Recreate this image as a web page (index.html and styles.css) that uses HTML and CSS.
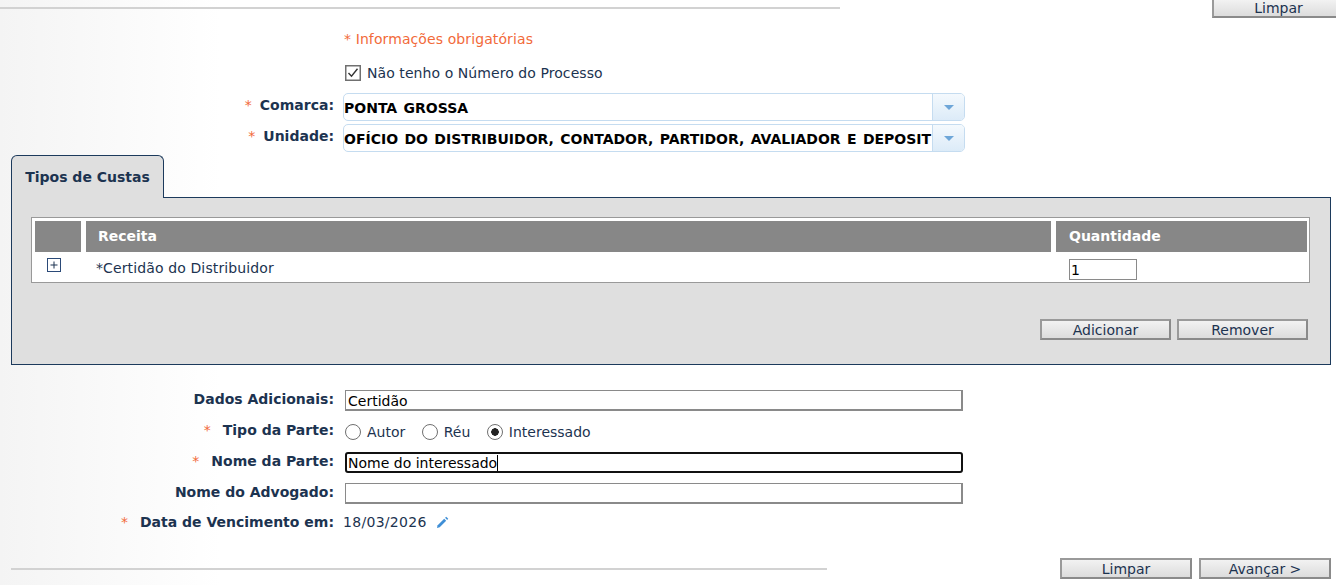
FILE: index.html
```html
<!DOCTYPE html>
<html lang="pt-BR">
<head>
    <meta charset="UTF-8">
    <title>Custas</title>
    <link rel="stylesheet" href="styles.css">
</head>
<body>
    <div class="top-bar">
        <div class="rule rule-top"></div>
        <button class="btn btn-top">Limpar</button>
    </div>

    <div class="form-head">
        <div class="row row-note"><span class="note">* Informações obrigatórias</span></div>
        <div class="row row-check">
            <label class="check-label">
                <svg class="check-icon" width="16" height="16" viewBox="0 0 16 16"><rect x="0.75" y="0.75" width="14.5" height="14.5" fill="#fff" stroke="#707070" stroke-width="1.5"/><path d="M3.5 8l3 3.2L12.5 3.8" fill="none" stroke="#333" stroke-width="1.4"/></svg>
                Não tenho o Número do Processo
            </label>
        </div>
        <div class="row row-combo">
            <span class="field-label"><span class="req">*</span>Comarca:</span>
            <div class="combo">
                <span class="combo-text">PONTA GROSSA</span>
                <span class="combo-arrow"></span>
            </div>
        </div>
        <div class="row row-combo">
            <span class="field-label"><span class="req">*</span>Unidade:</span>
            <div class="combo">
                <span class="combo-text">OFÍCIO DO DISTRIBUIDOR, CONTADOR, PARTIDOR, AVALIADOR E DEPOSIT</span>
                <span class="combo-arrow"></span>
            </div>
        </div>
    </div>

    <div class="tabs">
        <div class="tab">Tipos de Custas</div>
        <div class="panel">
            <div class="grid-box">
                <div class="grid-head">
                    <div class="cell-head cell-toggle"></div>
                    <div class="cell-head cell-name">Receita</div>
                    <div class="cell-head cell-qty">Quantidade</div>
                </div>
                <div class="grid-row">
                    <div class="cell-toggle">
                        <svg class="plus" width="14" height="14" viewBox="0 0 14 14"><rect x="0.5" y="0.5" width="13" height="13" fill="#fff" stroke="#2b4a78"/><path d="M3.5 7h7M7 3.5v7" stroke="#1c3350" stroke-width="1"/></svg>
                    </div>
                    <div class="cell-name">*Certidão do Distribuidor</div>
                    <div class="cell-qty"><div class="text-input qty-input">1</div></div>
                </div>
            </div>
            <div class="panel-actions">
                <button class="btn">Adicionar</button>
                <button class="btn">Remover</button>
            </div>
        </div>
    </div>

    <div class="form-foot">
        <div class="row row-input">
            <span class="field-label">Dados Adicionais:</span>
            <div class="text-input wide-input">Certidão</div>
        </div>
        <div class="row row-radio">
            <span class="field-label"><span class="req">*</span>Tipo da Parte:</span>
            <div class="radios">
                <span class="radio-item"><span class="radio"></span>Autor</span>
                <span class="radio-item"><span class="radio"></span>Réu</span>
                <span class="radio-item"><span class="radio radio-on"></span>Interessado</span>
            </div>
        </div>
        <div class="row row-input">
            <span class="field-label"><span class="req">*</span>Nome da Parte:</span>
            <div class="text-input wide-input input-focus">Nome do interessado<span class="caret"></span></div>
        </div>
        <div class="row row-input">
            <span class="field-label">Nome do Advogado:</span>
            <div class="text-input wide-input"></div>
        </div>
        <div class="row row-date">
            <span class="field-label"><span class="req">*</span>Data de Vencimento em:</span>
            <span class="date-value">18/03/2026</span>
            <svg class="pencil" width="13" height="13" viewBox="0 0 14 14"><path d="M1 13l.8-3 7-7 2.2 2.2-7 7z" fill="#3f8fd6"/><path d="M9.8 2l1.2-1.2 2.2 2.2-1.2 1.2z" fill="#3f8fd6"/></svg>
        </div>
    </div>

    <div class="bottom-bar">
        <div class="rule rule-bottom"></div>
        <div class="bottom-actions">
            <button class="btn">Limpar</button>
            <button class="btn">Avançar &gt;</button>
        </div>
    </div>
</body>
</html>
```

FILE: styles.css
```css
html, body {
    height: 585px;
    overflow: hidden;
}

body {
    margin: 0;
    background: linear-gradient(to right, #f4f4f4 0, #ffffff 220px);
    color: #1c3350;
    font-family: "DejaVu Sans", Verdana, sans-serif;
    font-size: 14px;
}

.top-bar {
    display: flex;
    justify-content: space-between;
    height: 18px;
}

.rule {
    height: 2px;
    background: #d2d2d2;
}

.rule-top {
    width: 840px;
    margin-top: 7px;
}

.btn {
    width: 131px;
    height: 21px;
    padding: 1px 0 0;
    border: 2px solid #8a8a8a;
    border-top-color: #9a9a9a;
    border-left-color: #9a9a9a;
    background: linear-gradient(#f2f2f2, #dcdcdc);
    color: #1c3350;
    font-family: inherit;
    font-size: 14px;
    line-height: 17px;
}

.btn-top {
    height: 18px;
    margin-right: -7px;
    padding: 0;
    border-top: none;
    border-right: none;
}

.form-head {
    height: 126px;
    padding-top: 11px;
}

.row {
    display: flex;
    align-items: center;
}

.row-note {
    height: 20px;
    padding-left: 344px;
}

.note {
    color: #f26a3a;
    letter-spacing: 0.1px;
}

.row-check {
    height: 20px;
    margin-top: 14px;
    padding-left: 345px;
}

.check-label {
    display: flex;
    align-items: center;
    gap: 6px;
    letter-spacing: 0.07px;
}

.row-combo {
    height: 28px;
    margin-bottom: 3px;
}

.row-check + .row-combo {
    margin-top: 10px;
}

.row-combo .field-label {
    margin-bottom: 4px;
}

.field-label {
    width: 334px;
    margin-right: 9px;
    text-align: right;
    font-weight: bold;
    flex-shrink: 0;
}

.req {
    margin-right: 8px;
    color: #f26a3a;
    font-weight: normal;
}

.combo {
    display: flex;
    width: 622px;
    height: 28px;
    box-sizing: border-box;
    border: 1px solid #c5dcf0;
    border-radius: 5px;
    background: #fff;
}

.combo-text {
    flex: 1;
    overflow: hidden;
    padding-top: 6px;
    color: #000;
    font-weight: bold;
    word-spacing: 1.5px;
    white-space: nowrap;
}

.combo-arrow {
    position: relative;
    width: 31px;
    flex-shrink: 0;
    border-left: 1px solid #c5dcf0;
    border-radius: 0 4px 4px 0;
    background: linear-gradient(#f4f9fd, #dcebf8);
}

.combo-arrow::after {
    content: "";
    position: absolute;
    left: 11px;
    top: 11px;
    border-left: 5px solid transparent;
    border-right: 5px solid transparent;
    border-top: 5px solid #6ea6d8;
}

.tabs {
    margin: 0 5px 0 11px;
}

.tab {
    position: relative;
    z-index: 1;
    width: 153px;
    height: 43px;
    box-sizing: border-box;
    border: 1px solid #1c3a5c;
    border-bottom: none;
    border-radius: 6px 6px 0 0;
    background: #dfdfdf;
    font-weight: bold;
    line-height: 43px;
    text-align: center;
}

.panel {
    height: 168px;
    box-sizing: border-box;
    margin-top: -1px;
    padding: 19px 20px 0 19px;
    border: 1px solid #1c3a5c;
    background: #dfdfdf;
}

.grid-box {
    height: 66px;
    box-sizing: border-box;
    padding: 3px 2px 0 3px;
    border: 1px solid #999;
    background: #fff;
}

.grid-head,
.grid-row {
    display: flex;
    gap: 5px;
}

.cell-toggle {
    width: 46px;
    flex-shrink: 0;
}

.cell-name {
    flex: 1;
    padding-left: 12px;
}

.cell-qty {
    width: 251px;
    flex-shrink: 0;
    padding-left: 13px;
    box-sizing: border-box;
}

.cell-head {
    height: 31px;
    background: #878787;
    color: #fff;
    font-weight: bold;
    line-height: 31px;
}

.grid-row {
    height: 31px;
}

.grid-row .cell-name {
    padding-left: 10px;
    line-height: 33px;
    letter-spacing: 0.12px;
}

.plus {
    display: block;
    margin: 6px 0 0 12px;
}

.text-input {
    box-sizing: border-box;
    height: 21px;
    border: 2px solid #8a8a8a;
    border-width: 1px 2px 2px 1px;
    background: #fff;
    color: #000;
    line-height: 20px;
    white-space: nowrap;
}

.qty-input {
    width: 68px;
    margin-top: 7px;
    padding-left: 1px;
    border-width: 1px 1px 1px 1px;
}

.panel-actions {
    display: flex;
    justify-content: flex-end;
    gap: 6px;
    margin-top: 36px;
    padding-right: 2px;
}

.form-foot {
    padding-top: 25px;
}

.form-foot .req {
    margin-right: 12px;
}

.wide-input {
    width: 618px;
    margin-left: 2px;
    padding-left: 2px;
}

.row-input,
.row-radio {
    height: 21px;
    margin-bottom: 10px;
}

.row-input .field-label,
.row-radio .field-label {
    margin-bottom: 3px;
}

.input-focus {
    border: 2px solid #111;
    border-radius: 3px;
    padding-left: 1px;
    line-height: 18px;
}

.caret {
    display: inline-block;
    width: 1px;
    height: 16px;
    background: #000;
    vertical-align: -3px;
}

.radios {
    display: flex;
    gap: 16.5px;
    margin-left: 2px;
}

.radio-item {
    display: flex;
    align-items: center;
    gap: 6px;
}

.radio {
    box-sizing: border-box;
    width: 16px;
    height: 16px;
    border: 1px solid #707070;
    border-radius: 50%;
    background: #fff;
}

.radio-on {
    background: radial-gradient(circle, #222 0 3.5px, #fff 4px);
}

.row-date {
    height: 20px;
    margin-top: -2px;
}

.date-value {
    letter-spacing: 0.3px;
}

.pencil {
    margin-left: 9px;
}

.bottom-bar {
    display: flex;
    justify-content: space-between;
    margin-top: 26px;
    padding: 0 5px 0 11px;
}

.rule-bottom {
    width: 816px;
    margin-top: 10px;
}

.bottom-actions {
    display: flex;
    gap: 7px;
}

.bottom-actions .btn {
    width: 132px;
}
```
